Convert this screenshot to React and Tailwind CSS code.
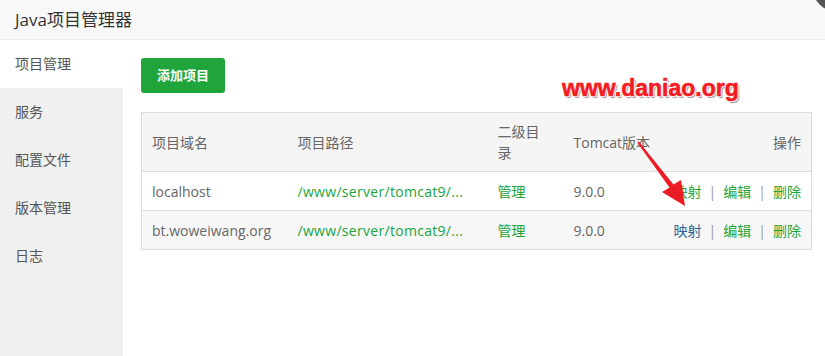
import React from 'react';

const FONT = { fontFamily: '"Open Sans", "Noto Sans CJK SC", sans-serif' };

const menu = ['项目管理', '服务', '配置文件', '版本管理', '日志'];

const projects = [
  { domain: 'localhost', path: '/www/server/tomcat9/...', version: '9.0.0', hover: false },
  { domain: 'bt.woweiwang.org', path: '/www/server/tomcat9/...', version: '9.0.0', hover: true },
];

function Actions({ hover }) {
  return (
    <span className="whitespace-nowrap">
      <a className={hover ? 'text-[#2d6496]' : 'text-[#20a53a]'}>映射</a>
      <span className="mx-[7px] text-[#999]">|</span>
      <a className="text-[#20a53a]">编辑</a>
      <span className="mx-[7px] text-[#999]">|</span>
      <a className="text-[#20a53a]">删除</a>
    </span>
  );
}

export default function App() {
  return (
    <div className="relative w-[825px] h-[356px] overflow-hidden bg-white flex flex-col" style={FONT}>
      {/* title bar */}
      <div className="h-[40px] shrink-0 bg-[#f8f8f8] border-b border-[#e9e9e9] flex items-center px-[15px] text-[17px] text-[#333]">
        Java项目管理器
      </div>

      <div className="flex flex-1 min-h-0">
        {/* side menu */}
        <ul className="w-[123px] shrink-0 bg-[#f0f0f0]">
          {menu.map((m, i) => (
            <li
              key={m}
              className={`h-[48px] leading-[48px] px-[15px] text-[14px] text-[#555] ${i === 0 ? 'bg-white' : ''}`}
            >
              {m}
            </li>
          ))}
        </ul>

        {/* content */}
        <div className="flex-1 pt-[18px] pl-[18px] pr-[13px]">
          <button className="h-[35px] w-[84px] rounded-[3px] bg-[#20a53a] text-white text-[13px] font-semibold">
            添加项目
          </button>

          <table className="mt-[19px] w-full table-fixed border-collapse border border-[#ddd] text-[14px] text-[#666]">
            <colgroup>
              <col className="w-[146px]" />
              <col className="w-[200px]" />
              <col className="w-[76px]" />
              <col className="w-[100px]" />
              <col />
            </colgroup>
            <thead>
              <tr className="bg-[#f5f5f5] h-[59px]">
                <th className="px-[10px] font-normal text-left leading-[21px]">项目域名</th>
                <th className="px-[10px] font-normal text-left leading-[21px]">项目路径</th>
                <th className="px-[10px] font-normal text-left leading-[21px]">
                  <span className="block max-w-[48px]">二级目录</span>
                </th>
                <th className="pl-[10px] font-normal text-left leading-[21px] whitespace-nowrap">Tomcat版本</th>
                <th className="px-[10px] font-normal text-right leading-[21px]">操作</th>
              </tr>
            </thead>
            <tbody>
              {projects.map((p, i) => (
                <tr key={p.domain} className={`h-[39px] border-t border-[#ddd] ${i % 2 ? 'bg-[#f7f7f7]' : 'bg-white'}`}>
                  <td className="px-[10px] whitespace-nowrap">{p.domain}</td>
                  <td className="px-[10px] whitespace-nowrap text-[#20a53a] tracking-[0.3px]">{p.path}</td>
                  <td className="px-[10px] text-[#20a53a]">管理</td>
                  <td className="px-[10px]">{p.version}</td>
                  <td className="px-[10px] text-right">
                    <Actions hover={p.hover} />
                  </td>
                </tr>
              ))}
            </tbody>
          </table>
        </div>
      </div>

      {/* watermark */}
      <div
        className="absolute left-[562px] top-[71px] text-[23px] font-bold text-[#f41c24] [text-shadow:-1px_-1px_0_#fff,1px_-1px_0_#fff,-1px_1px_0_#fff,1px_1px_0_#fff,2px_2px_1px_#999]"
        style={{ fontFamily: '"Liberation Sans", Arial, sans-serif', WebkitTextStroke: '0.6px #f41c24' }}
      >
        www.daniao.org
      </div>

      {/* close button corner */}
      <div className="absolute left-[812px] top-[-40px] w-[52px] h-[52px] rounded-full bg-[#555]" />

      {/* annotation arrow */}
      <svg className="absolute inset-0 pointer-events-none" width="825" height="356" viewBox="0 0 825 356">
        <polygon
          points="637.2,142.6 669.5,187.5 662,192 685,206 681,180 673.5,184.5 638.8,141.4"
          fill="#ec1c24"
        />
      </svg>
    </div>
  );
}
